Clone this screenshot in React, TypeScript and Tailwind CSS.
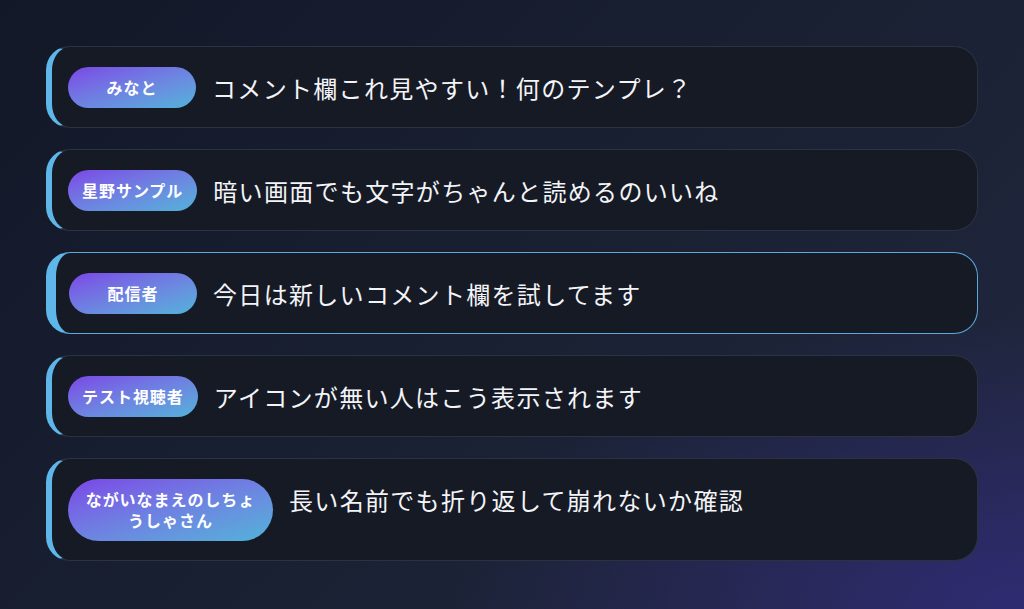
const comments = [
  { name: "みなと", text: "コメント欄これ見やすい！何のテンプレ？" },
  { name: "星野サンプル", text: "暗い画面でも文字がちゃんと読めるのいいね" },
  { name: "配信者", text: "今日は新しいコメント欄を試してます", owner: true },
  { name: "テスト視聴者", text: "アイコンが無い人はこう表示されます" },
  { name: "ながいなまえのしちょうしゃさん", text: "長い名前でも折り返して崩れないか確認" },
];

function NameBadge({ name }: { name: string }) {
  return (
    <div className="shrink-0 min-w-[128px] max-w-[205px] rounded-full bg-gradient-to-br from-[#7a44e6] to-[#4fb3d9] px-[14px] py-[10px] text-center text-[16px] leading-[21px] font-bold tracking-[0.06em] text-white">
      {name}
    </div>
  );
}

function CommentRow({ name, text, owner }: { name: string; text: string; owner?: boolean }) {
  return (
    <div
      className={
        owner
          ? "flex items-start gap-4 rounded-[24px] border border-l-[10px] border-[#5ba9dd] border-l-[#5fb6e9] bg-[#161a25] py-[19.5px] pl-[13px] pr-6"
          : "flex items-start gap-4 rounded-[24px] border border-l-[6px] border-[#2d3242] border-l-[#5fb6e9] bg-[#161a25] py-[19.5px] pl-[16px] pr-6"
      }
    >
      <NameBadge name={name} />
      <p className="text-[24px] leading-[41px] tracking-[0.055em] text-[#f3f4f8]">{text}</p>
    </div>
  );
}

export default function App() {
  return (
    <div
      className="min-h-screen w-full bg-[#141a2b] bg-[radial-gradient(ellipse_70%_60%_at_100%_100%,#2f2b72_0%,rgba(47,43,114,0.4)_45%,transparent_80%),linear-gradient(135deg,#121828_0%,#1a2133_55%,#222840_100%)] px-[46px] pt-[46px] pb-[47px]"
      style={{ fontFamily: '"Noto Sans CJK JP", "Noto Sans", sans-serif' }}
    >
      <div className="flex flex-col gap-[21px]">
        {comments.map((c) => (
          <CommentRow key={c.name} {...c} />
        ))}
      </div>
    </div>
  );
}
